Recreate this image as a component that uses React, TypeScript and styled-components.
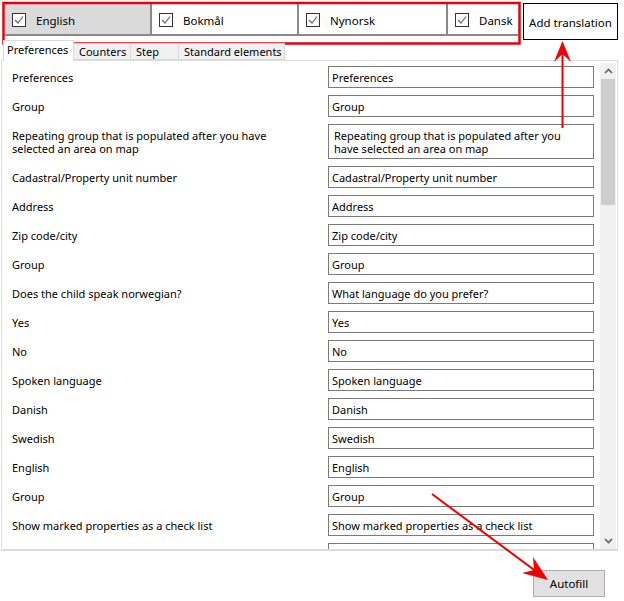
import { Fragment } from "react";
import styled, { createGlobalStyle } from "styled-components";

const GlobalStyle = createGlobalStyle`
  html, body {
    margin: 0;
    padding: 0;
    background: #ffffff;
  }
  * {
    box-sizing: border-box;
  }
`;

type Language = { name: string; width: number; selected?: boolean };

const LANGUAGES: Language[] = [
  { name: "English", width: 147, selected: true },
  { name: "Bokmål", width: 147 },
  { name: "Nynorsk", width: 149 },
  { name: "Dansk", width: 70 },
];

const TABS = [
  { name: "Preferences", width: 71 },
  { name: "Counters", width: 58 },
  { name: "Step", width: 49 },
  { name: "Standard elements", width: 107 },
];

type Row = { label: string; value: string; tall?: boolean };

const ROWS: Row[] = [
  { label: "Preferences", value: "Preferences" },
  { label: "Group", value: "Group" },
  {
    label: "Repeating group that is populated after you have\nselected an area on map",
    value: "Repeating group that is populated after you\nhave selected an area on map",
    tall: true,
  },
  { label: "Cadastral/Property unit number", value: "Cadastral/Property unit number" },
  { label: "Address", value: "Address" },
  { label: "Zip code/city", value: "Zip code/city" },
  { label: "Group", value: "Group" },
  { label: "Does the child speak norwegian?", value: "What language do you prefer?" },
  { label: "Yes", value: "Yes" },
  { label: "No", value: "No" },
  { label: "Spoken language", value: "Spoken language" },
  { label: "Danish", value: "Danish" },
  { label: "Swedish", value: "Swedish" },
  { label: "English", value: "English" },
  { label: "Group", value: "Group" },
  { label: "Show marked properties as a check list", value: "Show marked properties as a check list" },
  { label: "", value: "" },
];

const Window = styled.div`
  position: relative;
  width: 624px;
  height: 601px;
  overflow: hidden;
  background: #ffffff;
  font-family: "Noto Sans", "Open Sans", sans-serif;
  font-size: 11px;
  color: #000000;
`;

const Header = styled.div`
  display: flex;
  align-items: flex-start;
  height: 40px;
  padding-top: 3px;
`;

const LangBar = styled.div`
  display: flex;
  height: 33px;
  margin-left: 5px;
  border-bottom: 2px solid #8a8a8a;
`;

const LangCell = styled.div<{ $selected?: boolean }>`
  display: flex;
  align-items: center;
  gap: 10px;
  padding: 3px 0 0 7px;
  height: 100%;
  background: ${({ $selected }) => ($selected ? "#dadada" : "#ffffff")};
  border-right: 2px solid #8a8a8a;
  font-size: 11.5px;

  &:last-child {
    border-right: none;
  }
`;

const AddButton = styled.div`
  display: flex;
  align-items: center;
  justify-content: center;
  width: 95px;
  height: 37px;
  margin-left: 5px;
  padding-top: 1px;
  border: 1px solid #000000;
  background: #ffffff;
  font-size: 11.5px;
`;

const TabStrip = styled.div`
  display: flex;
  align-items: flex-end;
  height: 20px;
  padding-left: 3px;
  position: relative;
  z-index: 1;
`;

const Tab = styled.div<{ $active?: boolean }>`
  display: flex;
  align-items: center;
  height: ${({ $active }) => ($active ? "21px" : "17px")};
  margin-bottom: ${({ $active }) => ($active ? "-1px" : "0")};
  padding: ${({ $active }) => ($active ? "0 0 3px 3px" : "0 0 1px 5px")};
  background: ${({ $active }) => ($active ? "#ffffff" : "#f0f0f0")};
  border: 1px solid #d9d9d9;
  border-bottom: ${({ $active }) => ($active ? "none" : "1px solid #d9d9d9")};
  margin-left: -1px;
  font-size: 11px;

  &:first-child {
    margin-left: 0;
  }
`;

const Panel = styled.div`
  display: flex;
  width: 617px;
  height: 491px;
  margin-left: 1px;
  border: 1px solid #dcdcdc;
  border-bottom: 2px solid #dcdcdc;
  background: #ffffff;
`;

const Body = styled.div`
  flex: 1;
  overflow: hidden;
  padding: 5px 0 0 10px;
  display: grid;
  grid-template-columns: 316px 266px;
  grid-auto-rows: min-content;
  row-gap: 7px;
  align-content: start;
`;

const Label = styled.div`
  display: flex;
  align-items: center;
  white-space: pre-line;
  line-height: 13px;
`;

const Field = styled.div<{ $tall?: boolean }>`
  height: ${({ $tall }) => ($tall ? "35px" : "22px")};
  border: 1px solid #7a7a7a;
  padding: ${({ $tall }) => ($tall ? "3px 5px" : "0 3px")};
  display: flex;
  align-items: center;
  white-space: pre-line;
  line-height: 13px;
`;

const ScrollTrack = styled.div`
  display: flex;
  flex-direction: column;
  width: 16px;
  margin: 2px 1px 0 0;
  height: 486px;
  background: #f0f0f0;
`;

const ScrollArrow = styled.div`
  display: flex;
  align-items: center;
  justify-content: center;
  height: 16px;
`;

const ScrollThumb = styled.div`
  height: 126px;
  margin: 0 1px;
  background: #cdcdcd;
`;

const ScrollSpace = styled.div`
  flex: 1;
`;

const Footer = styled.div`
  display: flex;
  justify-content: flex-end;
  padding: 19px 19px 0 0;
`;

const AutofillButton = styled.div`
  display: flex;
  align-items: center;
  justify-content: center;
  width: 72px;
  height: 27px;
  background: #e1e1e1;
  border: 1px solid #adadad;
  font-size: 11.5px;
`;

const Annotations = styled.svg`
  position: absolute;
  left: 0;
  top: 0;
  pointer-events: none;
`;

function CheckBox() {
  return (
    <svg width="14" height="14" viewBox="0 0 14 14">
      <rect x="0.5" y="0.5" width="13" height="13" fill="#ffffff" stroke="#333333" />
      <polyline points="3,7 6,10 11,3.5" fill="none" stroke="#6a6a6a" strokeWidth="1.2" />
    </svg>
  );
}

function Chevron({ up }: { up?: boolean }) {
  return (
    <svg width="9" height="6" viewBox="0 0 9 6">
      <polyline
        points={up ? "1,5 4.5,1.5 8,5" : "1,1 4.5,4.5 8,1"}
        fill="none"
        stroke="#606060"
        strokeWidth="1.6"
      />
    </svg>
  );
}

export default function App() {
  return (
    <>
      <GlobalStyle />
      <Window>
        <Header>
          <LangBar>
            {LANGUAGES.map((lang) => (
              <LangCell key={lang.name} $selected={lang.selected} style={{ width: lang.width }}>
                <CheckBox />
                {lang.name}
              </LangCell>
            ))}
          </LangBar>
          <AddButton>Add translation</AddButton>
        </Header>

        <TabStrip>
          {TABS.map((tab, i) => (
            <Tab key={tab.name} $active={i === 0} style={{ width: tab.width }}>
              {tab.name}
            </Tab>
          ))}
        </TabStrip>

        <Panel>
          <Body>
            {ROWS.map((row, i) => (
              <Fragment key={i}>
                <Label>{row.label}</Label>
                <Field $tall={row.tall}>{row.value}</Field>
              </Fragment>
            ))}
          </Body>
          <ScrollTrack>
            <ScrollArrow>
              <Chevron up />
            </ScrollArrow>
            <ScrollThumb />
            <ScrollSpace />
            <ScrollArrow>
              <Chevron />
            </ScrollArrow>
          </ScrollTrack>
        </Panel>

        <Footer>
          <AutofillButton>Autofill</AutofillButton>
        </Footer>

        <Annotations width="624" height="601" viewBox="0 0 624 601">
          <rect x="3.5" y="3" width="516" height="40.5" fill="none" stroke="#e8000b" strokeWidth="2.5" />
          <line x1="562.5" y1="128" x2="562.5" y2="46" stroke="#f00000" strokeWidth="2" />
          <polygon points="562.5,41 571,62 562.5,54 554,62" fill="#f00000" />
          <line x1="432" y1="494" x2="541" y2="575" stroke="#f00000" strokeWidth="2" />
          <polygon points="548,580 522,573 534,570 533,557" fill="#f00000" />
        </Annotations>
      </Window>
    </>
  );
}
